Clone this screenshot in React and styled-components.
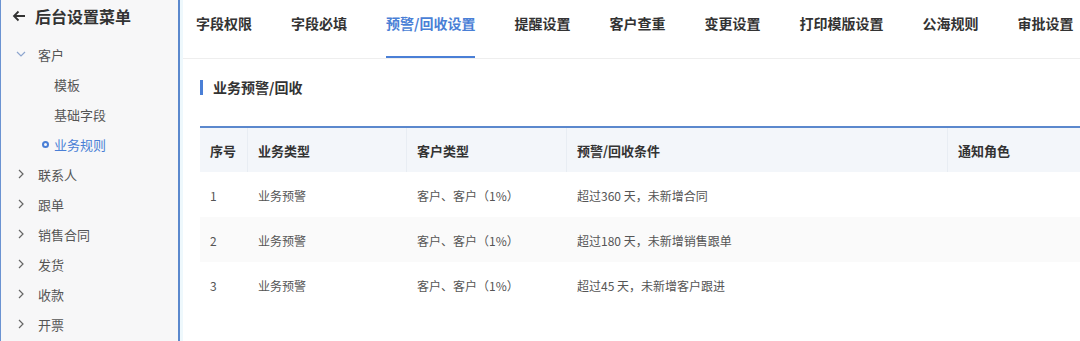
import React from 'react';
import styled, { createGlobalStyle } from 'styled-components';

const GlobalStyle = createGlobalStyle`
  body {
    margin: 0;
    font-family: "Noto Sans CJK SC", "Noto Sans", sans-serif;
    background: #fff;
  }
`;

const Page = styled.div`
  display: flex;
  width: 1080px;
  height: 341px;
  overflow: hidden;
`;

const Sidebar = styled.aside`
  width: 177px;
  flex-shrink: 0;
  background: #f7f7f8;
  border-left: 1px solid #6b93d2;
  border-right: 2px solid #5b88cd;
`;

const SideTitle = styled.div`
  display: flex;
  align-items: center;
  gap: 9px;
  height: 31px;
  padding-left: 11px;
  font-size: 16px;
  font-weight: bold;
  color: #333;
`;

const Menu = styled.ul`
  list-style: none;
  margin: 8px 0 0;
  padding: 0;
`;

const MenuRow = styled.li`
  display: flex;
  align-items: center;
  height: 30px;
  padding-left: ${p => (p.$sub ? 41 : 15)}px;
  gap: ${p => (p.$sub ? 5 : 12)}px;
  font-size: 13px;
  color: ${p => (p.$active ? '#4a7fd6' : '#555')};
`;

const Chevron = styled.svg`
  width: 10px;
  height: 10px;
  flex-shrink: 0;
`;

const Dot = styled.span`
  width: 7px;
  height: 7px;
  box-sizing: border-box;
  border-radius: 50%;
  border: 2px solid ${p => (p.$show ? '#4a7fd6' : 'transparent')};
`;

const Main = styled.main`
  flex: 1;
  min-width: 0;
  border-left: 3px solid #eef8fc;
`;

const TabBar = styled.nav`
  display: flex;
  gap: 39px;
  height: 58px;
  padding-left: 13px;
  border-bottom: 1px solid #eeeeee;
  white-space: nowrap;
`;

const Tab = styled.div`
  box-sizing: border-box;
  height: 58px;
  padding-top: 13px;
  line-height: 20px;
  font-size: 14px;
  font-weight: bold;
  color: ${p => (p.$active ? '#4a7fd6' : '#333')};
  border-bottom: 2px solid ${p => (p.$active ? '#4a7fd6' : 'transparent')};
`;

const SectionHead = styled.div`
  display: flex;
  align-items: center;
  gap: 10px;
  height: 20px;
  margin: 18px 0 0 17px;
  font-size: 14px;
  font-weight: bold;
  color: #333;
`;

const Bar = styled.span`
  width: 3px;
  height: 15px;
  background: #4a7fd6;
`;

const Table = styled.div`
  margin: 29px 0 0 17px;
  border-top: 2px solid #5b88cd;
`;

const Row = styled.div`
  display: grid;
  grid-template-columns: 48px 159px 160px 381px 1fr;
  align-items: stretch;
  height: ${p => (p.$head ? 44 : 45)}px;
  background: ${p => (p.$head ? '#f3f6fa' : p.$striped ? '#fafafa' : '#fff')};
`;

const Cell = styled.div`
  display: flex;
  align-items: center;
  padding-left: 10px;
  padding-top: ${p => (p.$head ? 0 : 2)}px;
  font-size: ${p => (p.$head ? 13 : 12)}px;
  font-weight: ${p => (p.$head ? 'bold' : 'normal')};
  color: ${p => (p.$head ? '#333' : '#555')};
  border-right: 1px solid ${p => (p.$head && !p.$last ? '#e8edf3' : 'transparent')};
  white-space: nowrap;
`;

const tabs = ['字段权限', '字段必填', '预警/回收设置', '提醒设置', '客户查重', '变更设置', '打印模版设置', '公海规则', '审批设置'];
const heads = ['序号', '业务类型', '客户类型', '预警/回收条件', '通知角色'];
const rows = [
  ['1', '业务预警', '客户、客户（1%）', '超过360 天，未新增合同', ''],
  ['2', '业务预警', '客户、客户（1%）', '超过180 天，未新增销售跟单', ''],
  ['3', '业务预警', '客户、客户（1%）', '超过45 天，未新增客户跟进', ''],
];
const groups = ['联系人', '跟单', '销售合同', '发货', '收款', '开票'];

const Right = () => (
  <Chevron viewBox="0 0 10 10">
    <path d="M3 1 L7 5 L3 9" fill="none" stroke="#666" strokeWidth="1.2" />
  </Chevron>
);

const Down = () => (
  <Chevron viewBox="0 0 10 10">
    <path d="M1 3 L5 7 L9 3" fill="none" stroke="#8ea6cf" strokeWidth="1.2" />
  </Chevron>
);

export default function App() {
  return (
    <Page>
      <GlobalStyle />
      <Sidebar>
        <SideTitle>
          <svg width="14" height="12" viewBox="0 0 14 12">
            <path d="M13 6 H2 M6.5 1.5 L2 6 L6.5 10.5" fill="none" stroke="#333" strokeWidth="1.8" />
          </svg>
          后台设置菜单
        </SideTitle>
        <Menu>
          <MenuRow><Down />客户</MenuRow>
          <MenuRow $sub><Dot />模板</MenuRow>
          <MenuRow $sub><Dot />基础字段</MenuRow>
          <MenuRow $sub $active><Dot $show />业务规则</MenuRow>
          {groups.map(g => (
            <MenuRow key={g}><Right />{g}</MenuRow>
          ))}
        </Menu>
      </Sidebar>
      <Main>
        <TabBar>
          {tabs.map(t => (
            <Tab key={t} $active={t === '预警/回收设置'}>{t}</Tab>
          ))}
        </TabBar>
        <SectionHead><Bar />业务预警/回收</SectionHead>
        <Table>
          <Row $head>
            {heads.map((h, i) => (
              <Cell key={h} $head $last={i === heads.length - 1}>{h}</Cell>
            ))}
          </Row>
          {rows.map((r, i) => (
            <Row key={r[0]} $striped={i === 1}>
              {r.map((c, j) => <Cell key={j}>{c}</Cell>)}
            </Row>
          ))}
        </Table>
      </Main>
    </Page>
  );
}
